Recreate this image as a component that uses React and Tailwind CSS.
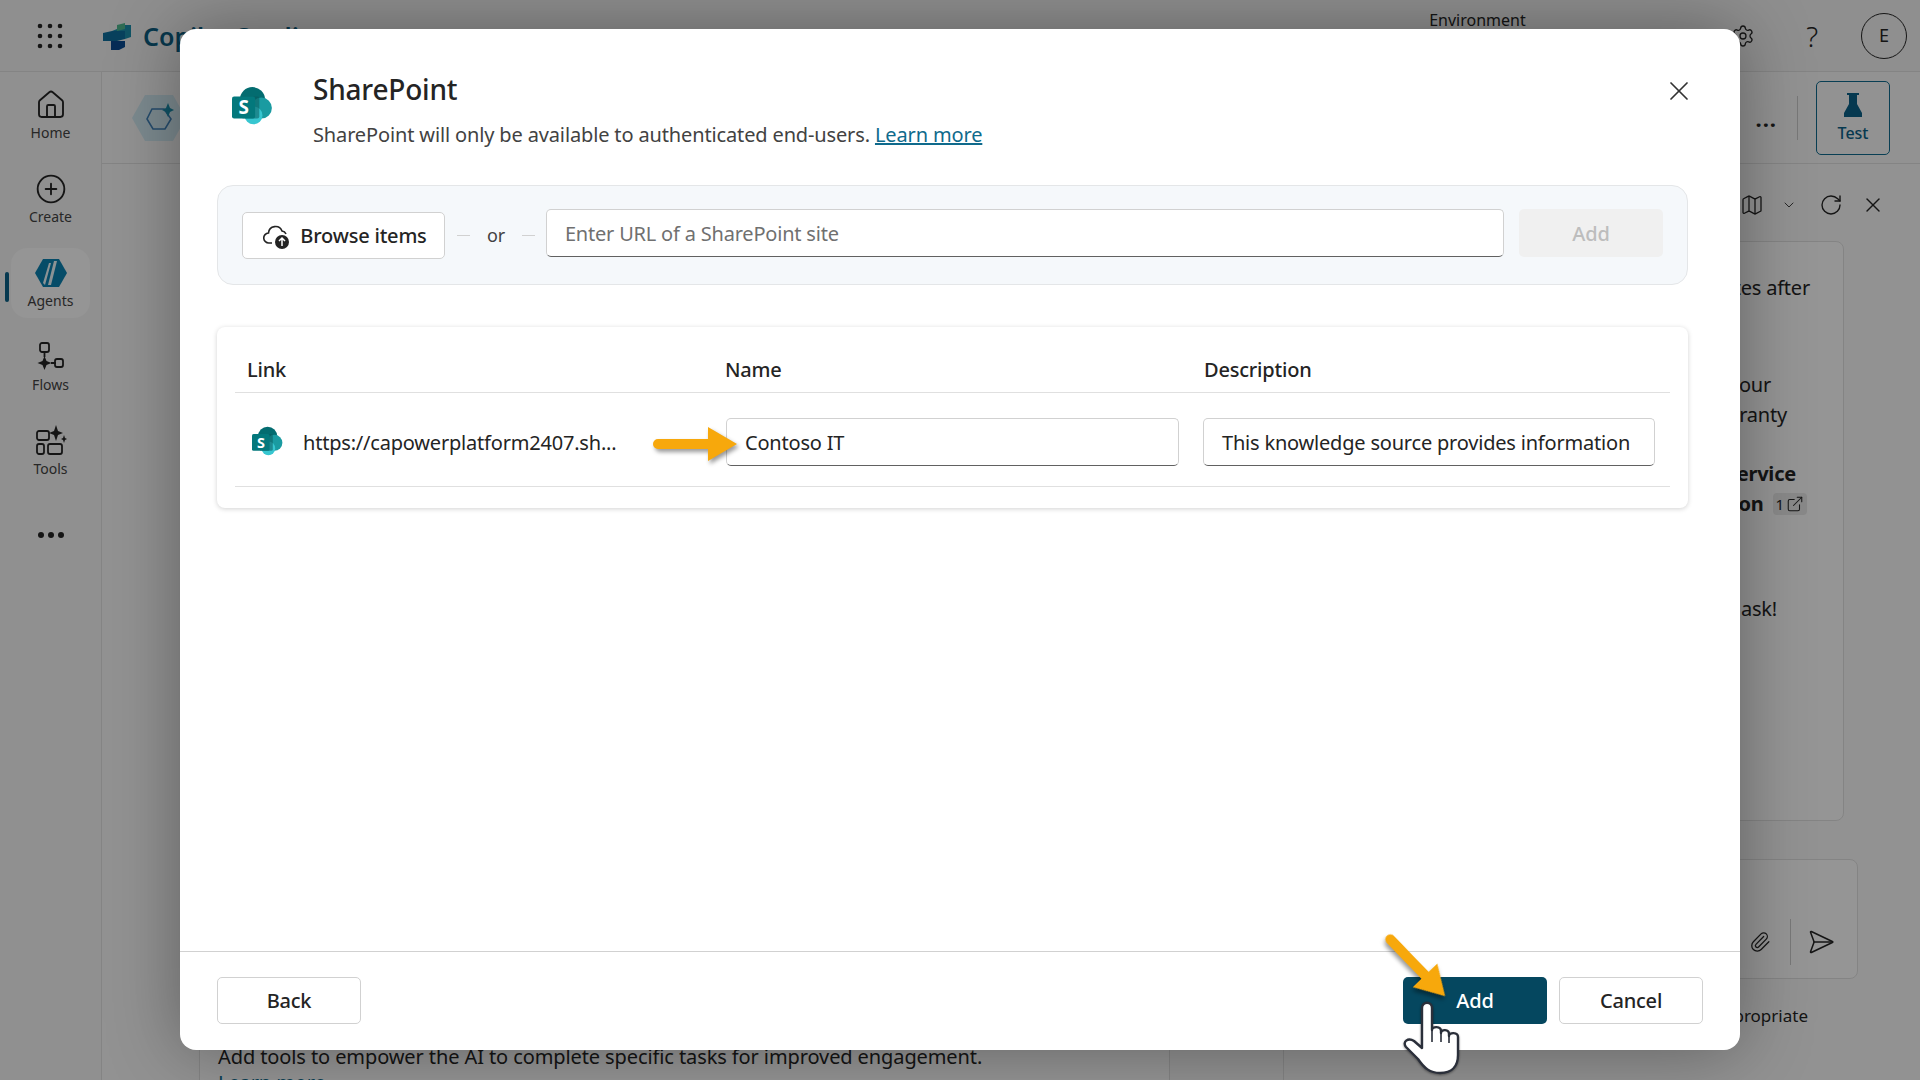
import { Home, CirclePlus, X, Settings, Map, ChevronDown, RotateCw, Paperclip, SendHorizontal, Globe, ExternalLink } from 'lucide-react';

function SharePointLogo({ size = 40 }) {
  return (
    <svg width={size} height={size} viewBox="0 0 40 40" className="shrink-0">
      <circle cx="19.5" cy="13" r="12" fill="#036c70" />
      <circle cx="28" cy="21" r="10" fill="#1a9ba1" />
      <circle cx="20.5" cy="28" r="8.5" fill="#37c6d0" />
      <path d="M10 10h14a2 2 0 0 1 2 2v17a2 2 0 0 1-2 2H10z" fill="#0b5a5d" opacity="0.55" />
      <rect x="0" y="10" width="22" height="21" rx="2" fill="#03787c" />
      <text x="11" y="27" textAnchor="middle" fontSize="18" fontWeight="700" fill="#fff" fontFamily="'Noto Sans', sans-serif">S</text>
    </svg>
  );
}

function NavItem({ icon, label, active }) {
  return (
    <div className={`relative mx-[11px] flex h-[70px] w-[79px] flex-col items-center justify-center rounded-[16px] ${active ? 'bg-[#ffffff]/50' : ''}`}>
      {active && <div className="absolute left-[-6px] top-[24px] h-[30px] w-[4px] rounded bg-[#0b5f85]" />}
      <div className="flex h-[36px] items-center justify-center">{icon}</div>
      <div className="text-[14px] leading-[20px] text-[#424242]">{label}</div>
    </div>
  );
}

function Arrow({ className, rotate }) {
  return (
    <svg className={`absolute drop-shadow-[2px_3px_2px_rgba(0,0,0,0.4)] ${className}`} width="84" height="34" viewBox="0 0 84 34" style={{ transform: `rotate(${rotate}deg)` }}>
      <path d="M5 12h50V0l29 17-29 17V22H5a5 5 0 0 1 0-10z" fill="#f7a80c" />
    </svg>
  );
}

function OutlineBtn({ children, className = '' }) {
  return (
    <button className={`flex h-[47px] w-[144px] items-center justify-center rounded-[5px] border border-[#d1d1d1] bg-white pt-[2px] text-[20px] font-medium text-[#242424] ${className}`}>
      {children}
    </button>
  );
}

export default function App() {
  return (
    <div className="relative h-[1080px] w-[1920px] overflow-hidden bg-[#f4f4f4] font-['Noto_Sans',sans-serif] text-[#242424]">
      {/* page behind the dialog */}
      <header className="flex h-[72px] items-center border-b border-[#dddddd] bg-[#efefef]">
        <svg width="26" height="26" viewBox="0 0 26 26" className="ml-[37px]" fill="#242424">
          {[3, 13, 23].map(y => [3, 13, 23].map(x => <circle key={`${x}-${y}`} cx={x} cy={y} r="2.3" />))}
        </svg>
        <svg width="30" height="28" viewBox="0 0 30 28" className="ml-[40px] mt-[2px]">
          <path d="M9 8l5-2V2l14 0v12l-6 2V8z" fill="#1c8ba8" />
          <path d="M14 2l8-2v6l-8 2z" fill="#4fb58d" />
          <path d="M0 10l9-2h13v8l-8 2H0z" fill="#0e6d9c" />
          <path d="M8 18h14v6l-6 3H8z" fill="#0b4a8f" />
        </svg>
        <span className="ml-[10px] mt-[2px] text-[25px] font-semibold text-[#0c5d7f]">Copilot Studio</span>
        <div className="ml-auto flex items-center">
          <Globe size={22} className="mr-[24px] mt-[10px]" strokeWidth={1.4} />
          <div className="mb-[32px] mr-[2px] w-[291px] -translate-x-[9px] text-[16px] leading-[22px]">Environment</div>
          <Settings size={24} strokeWidth={1.3} />
          <span className="ml-[51px] text-[28px] font-light leading-none">?</span>
          <div className="ml-[43px] mr-[13px] flex h-[46px] w-[46px] items-center justify-center rounded-full border border-[#242424] text-[18px]">E</div>
        </div>
      </header>

      <div className="flex h-[1008px]">
        <nav className="flex w-[102px] shrink-0 flex-col border-r border-[#dddddd] bg-[#f0f0f0] pt-[8px]">
          <NavItem label="Home" icon={<Home size={32} strokeWidth={1.4} />} />
          <div className="h-[14px]" />
          <NavItem label="Create" icon={<CirclePlus size={32} strokeWidth={1.4} />} />
          <div className="h-[14px]" />
          <NavItem active label="Agents" icon={
            <svg width="32" height="28" viewBox="0 0 32 28">
              <path d="M8 0h16l8 14-8 14H8L0 14z" fill="#0b7fae" />
              <path d="M13 26L19 2h3l-6 24zM8 24l6-20h2L10 26z" fill="#e8f3f7" />
            </svg>
          } />
          <div className="h-[14px]" />
          <NavItem label="Flows" icon={
            <svg width="30" height="30" viewBox="0 0 30 30" fill="none" stroke="#242424" strokeWidth="1.8" className="-translate-x-[2px]">
              <rect x="6" y="1" width="9" height="9" rx="2" />
              <path d="M10.5 10v5M17 21h5" />
              <path d="M10.5 14l2 5 5 2-5 2-2 5-2-5-5-2 5-2z" fill="#242424" stroke="none" />
              <rect x="21" y="17" width="8" height="8" rx="2" />
            </svg>
          } />
          <div className="h-[14px]" />
          <NavItem label="Tools" icon={
            <svg width="32" height="32" viewBox="0 0 32 32" fill="none" stroke="#242424" strokeWidth="1.8">
              <rect x="2" y="6" width="12" height="9" rx="2" />
              <rect x="2" y="19" width="7" height="10" rx="2" />
              <rect x="13" y="19" width="14" height="10" rx="2" />
              <path d="M21 0l2 6 5 2-5 2-2 6-2-6-5-2 5-2zM29 10l1 3 2 1-2 1-1 3-1-3-2-1 2-1z" fill="#242424" stroke="none" />
            </svg>
          } />
          <div className="mt-[46px] flex justify-center gap-[4px]">
            <span className="h-[6px] w-[6px] rounded-full bg-[#242424]" />
            <span className="h-[6px] w-[6px] rounded-full bg-[#242424]" />
            <span className="h-[6px] w-[6px] rounded-full bg-[#242424]" />
          </div>
        </nav>

        <main className="flex flex-1 flex-col">
          <div className="flex h-[92px] shrink-0 items-center border-b border-[#dddddd] pl-[30px] pr-[30px]">
            <svg width="54" height="46" viewBox="0 0 54 46">
              <path d="M13 0h28l13 23-13 23H13L0 23z" fill="#cfe6ef" />
              <path d="M20 14h12l7 10-6 10H21l-6-10z" fill="none" stroke="#3f7fb5" strokeWidth="1.6" />
              <path d="M36 8l2 5 4 2-4 2-2 5-2-5-4-2 4-2z" fill="#1c8ba8" />
            </svg>
            <div className="ml-auto flex items-center">
              <span className="mr-[2px] text-[22px] font-bold leading-none tracking-[1px] text-[#242424]">...</span>
              <div className="mx-[18px] h-[44px] w-px bg-[#c8c8c8]" />
              <div className="flex h-[74px] w-[74px] flex-col items-center justify-center rounded-[5px] border border-[#0f6a8c]">
                <svg width="18" height="24" viewBox="0 0 18 24" fill="#0b5f85">
                  <path d="M3 0h12v2h-2v9l5 9v4H0v-4l5-9V2H3z" />
                </svg>
                <span className="mt-[6px] text-[16px] font-medium leading-[20px] text-[#0b5f85]">Test</span>
              </div>
            </div>
          </div>

          <div className="flex min-h-0 flex-1">
            <div className="flex w-[1068px] shrink-0 flex-col justify-end overflow-hidden pl-[97px]">
              <div className="-mb-[16px] w-[971px] border-x border-[#dddddd] bg-[#f8f8f8] pl-[18px] text-[20px] leading-[26px] tracking-[-0.1px]">
                <div>Add tools to empower the AI to complete specific tasks for improved engagement.</div>
                <div className="text-[#0f6a8c] underline">Learn more</div>
              </div>
            </div>
            <div className="ml-[113px] flex flex-1 flex-col border-l border-[#dddddd]">
              <div className="flex h-[77px] shrink-0 items-center justify-end pr-[35px] pt-[4px]">
                <Map size={24} strokeWidth={1.3} />
                <ChevronDown size={16} strokeWidth={1.3} className="ml-[17px]" />
                <RotateCw size={24} strokeWidth={1.4} className="ml-[22px]" />
                <X size={24} strokeWidth={1.4} className="ml-[18px]" />
              </div>
              <div className="mr-[76px] h-[580px] rounded-[8px] border border-[#dddddd] bg-[#f8f8f8] pt-[31px] text-right text-[20px] leading-[30px] tracking-[-0.2px]">
                <div className="whitespace-nowrap pr-[33px]">updates after</div>
                <div className="mt-[67px] whitespace-nowrap pr-[72px]">your</div>
                <div className="whitespace-nowrap pr-[56px]">warranty</div>
                <div className="mt-[29px] whitespace-nowrap pr-[47px] font-bold">Service</div>
                <div className="flex items-center justify-end pr-[36px] font-bold">
                  on
                  <span className="ml-[9px] flex h-[22px] items-center gap-[2px] rounded-[4px] bg-[#e4e4e4] px-[3px] text-[15px] font-normal">
                    1<ExternalLink size={18} strokeWidth={1.4} />
                  </span>
                </div>
                <div className="mt-[75px] whitespace-nowrap pr-[66px]">ask!</div>
              </div>
              <div className="mr-[62px] mt-[38px] flex h-[120px] items-end justify-end rounded-[8px] border border-[#dddddd] bg-[#f8f8f8] pb-[13px] pr-[22px]">
                <Paperclip size={22} strokeWidth={1.4} className="mb-[12px] mr-[19px]" />
                <div className="h-[46px] w-px bg-[#c8c8c8]" />
                <SendHorizontal size={28} strokeWidth={1.3} className="mb-[9px] ml-[16px]" />
              </div>
              <div className="mt-[24px] whitespace-nowrap pr-[112px] text-right text-[17px]">inappropriate</div>
            </div>
          </div>
        </main>
      </div>

      <div className="absolute inset-0 bg-black/40" />

      {/* dialog */}
      <div className="absolute left-[180px] top-[29px] flex h-[1021px] w-[1560px] flex-col rounded-[16px] bg-white tracking-[-0.2px] shadow-[0_0_70px_rgba(0,0,0,0.35)]">
        <div className="flex h-[156px] shrink-0 pl-[52px] pr-[50px] pt-[41px]">
          <div className="mt-[16px] w-[81px]"><SharePointLogo size={42} /></div>
          <div>
            <h1 className="text-[28px] font-medium leading-[38px]">SharePoint</h1>
            <p className="mt-[13px] text-[20px] leading-[28px] tracking-[-0.14px] text-[#424242]">
              SharePoint will only be available to authenticated end-users. <span className="text-[#0f6a8c] underline">Learn more</span>
            </p>
          </div>
          <X size={32} strokeWidth={1.3} className="ml-auto mr-[-5px] mt-[5px] text-[#333333]" />
        </div>

        <div className="ml-[37px] flex h-[100px] w-[1471px] shrink-0 items-center rounded-[16px] border border-[#e4e6e8] bg-[#f5f8fb] pl-[24px] pr-[24px]">
          <button className="flex h-[47px] w-[203px] items-center justify-center gap-[10px] rounded-[5px] border border-[#d1d1d1] bg-white pl-[3px] pt-[2px] text-[20px] font-medium">
            <svg width="27" height="25" viewBox="0 0 27 25" fill="none">
              <path d="M9 19H6a5 5 0 0 1-.5-10A7 7 0 0 1 19 7a5 5 0 0 1 4 3" stroke="#242424" strokeWidth="1.6" />
              <circle cx="19" cy="18" r="7" fill="#242424" />
              <path d="M19 22v-8M16 17l3-3 3 3" stroke="#fff" strokeWidth="1.5" />
            </svg>
            Browse items
          </button>
          <div className="ml-[12px] h-px w-[13px] bg-[#d1d1d1]" />
          <span className="mx-[17px] text-[18px] text-[#424242]">or</span>
          <div className="h-px w-[13px] bg-[#d1d1d1]" />
          <div className="mb-[4px] ml-[11px] flex h-[48px] w-[958px] items-center rounded-[5px] border border-[#d1d1d1] border-b-[#616161] bg-white pl-[18px] pt-[2px] text-[20px] text-[#707070]">
            Enter URL of a SharePoint site
          </div>
          <div className="mb-[4px] ml-[15px] flex h-[48px] w-[144px] items-center justify-center rounded-[5px] bg-[#f0f0f0] pt-[2px] text-[20px] font-medium text-[#bdbdbd]">Add</div>
        </div>

        <div className="ml-[37px] mt-[42px] h-[181px] w-[1471px] shrink-0 rounded-[8px] bg-white px-[18px] shadow-[0_1px_5px_rgba(0,0,0,0.18)]">
          <div className="grid h-[66px] grid-cols-[478px_479px_1fr] items-center border-b border-[#e0e0e0] pl-[12px] pt-[20px] text-[20px] font-medium">
            <div>Link</div>
            <div>Name</div>
            <div>Description</div>
          </div>
          <div className="grid h-[94px] grid-cols-[491px_477px_1fr] items-center border-b border-[#e0e0e0] pt-[4px]">
            <div className="flex items-center pl-[17px]">
              <SharePointLogo size={32} />
              <span className="ml-[19px] pt-[2px] text-[20px]">https://capowerplatform2407.sh...</span>
            </div>
            <div className="flex h-[48px] w-[453px] items-center rounded-[5px] border border-[#d1d1d1] border-b-[#616161] pl-[18px] pt-[2px] text-[20px]">Contoso IT</div>
            <div className="flex h-[48px] w-[452px] items-center rounded-[5px] border border-[#d1d1d1] border-b-[#616161] pl-[18px] pt-[2px] text-[20px]">This knowledge source provides information</div>
          </div>
        </div>

        <div className="mt-auto flex h-[99px] shrink-0 items-center border-t border-[#d1d1d1] pb-[2px] pl-[37px] pr-[37px]">
          <OutlineBtn>Back</OutlineBtn>
          <button className="ml-auto flex h-[47px] w-[144px] items-center justify-center rounded-[5px] bg-[#05475f] pt-[2px] text-[20px] font-medium text-white">Add</button>
          <OutlineBtn className="ml-[12px]">Cancel</OutlineBtn>
        </div>
      </div>

      {/* annotations */}
      <Arrow className="left-[653px] top-[427px]" rotate={0} />
      <Arrow className="left-[1374px] top-[949px]" rotate={46} />
      <svg className="absolute left-[1402px] top-[1001px] drop-shadow-[0_1px_1px_rgba(0,0,0,0.4)]" width="60" height="74" viewBox="0 0 60 74">
        <path d="M20 7c0-7 10-7 10 0v22c0-4 9-4 9 1v2c0-4 8-4 8 1v2c0-4 9-4 9 1v18c0 10-5 18-18 18-10 0-16-5-22-14L4 46c-4-5 2-10 8-6l8 7z" fill="#fff" stroke="#2a2f3a" strokeWidth="2.4" strokeLinejoin="round" />
        <path d="M30 29v12M39 31v10M47 34v8" stroke="#2a2f3a" strokeWidth="1.6" fill="none" />
      </svg>
    </div>
  );
}
